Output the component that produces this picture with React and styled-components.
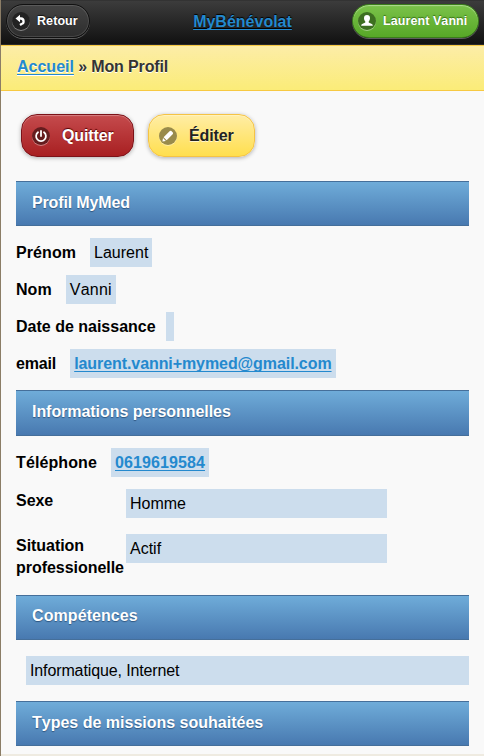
import React from "react";
import styled, { createGlobalStyle } from "styled-components";

const GlobalStyle = createGlobalStyle`
  * { box-sizing: border-box; }
  body { margin: 0; background: #f9f9f9; overflow: hidden; }
  body, button { font-family: "Liberation Sans", Helvetica, Arial, sans-serif; font-kerning: none; }
`;

const Page = styled.div`
  height: 756px;
  display: flex;
  flex-direction: column;
  border-left: 1px solid #8b7d66;
  background: #f9f9f9;
  color: #000;
  font-size: 16px;
  overflow: hidden;
`;

const Header = styled.header`
  flex: none;
  height: 45px;
  padding: 3px 5px 0 5px;
  display: grid;
  grid-template-columns: 1fr auto 1fr;
  align-items: start;
  border-top: 1px solid #333;
  border-bottom: 1px solid #2a2a2a;
  background: linear-gradient(#3c3c3c, #111);
`;

const Link = styled.a`
  color: #2489ce;
  font-weight: bold;
  letter-spacing: ${(p) => p.$track || 0}px;
  text-decoration: underline;
  text-decoration-thickness: 1px;
  text-underline-offset: 2px;
  text-decoration-skip-ink: none;
`;

const Title = styled(Link)`
  margin-top: 9px;
  line-height: 18px;
  text-shadow: 0 -1px 1px #000;
`;

const tones = {
  dark: "border-color:#111;background:linear-gradient(#444,#2d2d2d);color:#fff;text-shadow:0 -1px 1px #111;",
  green: "border-color:#3b7d1b;background:linear-gradient(#7bc24a,#57a827);color:#fff;text-shadow:0 -1px 1px #387016;",
  red: "border-color:#7c1218;background:linear-gradient(#c54b4d,#a81f21);color:#fff;text-shadow:0 -1px 1px #500;",
  yellow: "border-color:#f5c344;background:linear-gradient(#ffeda5,#ffdf4e);color:#222;text-shadow:0 1px 0 #fff6cd;",
};

const SmallButton = styled.button`
  display: flex;
  align-items: center;
  justify-self: ${(p) => (p.$end ? "end" : "start")};
  width: ${(p) => p.$w}px;
  height: 34px;
  padding: 0 0 0 5px;
  gap: 7px;
  border: 1px solid;
  border-radius: 17px;
  font-size: 12.5px;
  font-weight: bold;
  letter-spacing: 0.08px;
  white-space: nowrap;
  ${(p) => tones[p.$tone]}
  box-shadow: ${(p) => (p.$tone === "dark" ? "inset 0 0 0 1px rgba(255, 255, 255, 0.12)" : "inset 0 1px 1px rgba(255, 255, 255, 0.4)")}, 0 1px 0 rgba(255, 255, 255, 0.3);
`;

const LargeButton = styled.button`
  display: flex;
  align-items: center;
  width: ${(p) => p.$w}px;
  height: 43px;
  padding: 0 0 0 10px;
  gap: 12px;
  border: 1px solid;
  border-radius: 16px;
  font-size: 16px;
  letter-spacing: -0.1px;
  font-weight: bold;
  ${(p) => tones[p.$tone]}
  box-shadow: inset 0 1px 1px rgba(255, 255, 255, 0.3), 0 1px 4px rgba(0, 0, 0, 0.3);
`;

const Disc = styled.span`
  flex: none;
  width: 18px;
  height: 18px;
  border-radius: 50%;
  background: ${(p) => p.$bg};
  box-shadow: 0 1px 0 rgba(255, 255, 255, 0.4);
  svg { display: block; }
`;

const Breadcrumb = styled.nav`
  flex: none;
  height: 46px;
  padding: 12px 16px 0;
  line-height: 18px;
  font-weight: bold;
  letter-spacing: -0.14px;
  border-top: 1px solid #f7c942;
  border-bottom: 1px solid #f7c942;
  background: linear-gradient(#fceda7, #fbec78);
  color: #333;
  text-shadow: 0 1px 0 #fff;
`;

const Content = styled.main`
  flex: 1;
  padding: 23px 15px 0;
`;

const Actions = styled.div`
  display: flex;
  gap: 14px;
  padding-left: 5px;
  margin-bottom: 24px;
`;

const SectionTitle = styled.h3`
  margin: 0;
  height: ${(p) => p.$h || 45}px;
  padding: ${(p) => (p.$raised ? 10 : 11)}px 16px 0;
  line-height: 20px;
  font-size: 16px;
  letter-spacing: ${(p) => p.$track || 0}px;
  color: #fff;
  border-top: 1px solid #456f9a;
  border-bottom: 1px solid #456f9a;
  background: linear-gradient(#6facd9, #4879b0);
  text-shadow: 0 1px 1px #2f5680;
`;

const Fields = styled.div`
  display: flex;
  flex-direction: column;
  gap: 8px;
  padding: 12px 0;
`;

const Row = styled.div`
  display: flex;
  height: 29px;
  gap: ${(p) => p.$gap || 14}px;
`;

const Label = styled.span`
  font-weight: bold;
  line-height: 29px;
  letter-spacing: ${(p) => p.$track || 0}px;
  white-space: nowrap;
`;

const Value = styled.span`
  height: 29px;
  padding: 0 4px;
  line-height: 29px;
  letter-spacing: ${(p) => p.$track || 0}px;
  white-space: nowrap;
  background: #ccdded;
  color: #000;
`;

const GridRow = styled.div`
  display: grid;
  grid-template-columns: 110px 261px;
  align-items: start;
  height: ${(p) => p.$h}px;
`;

const WrapLabel = styled.span`
  padding-top: 1px;
  font-weight: bold;
  line-height: 22px;
  letter-spacing: -0.04px;
`;

const Skills = styled.div`
  display: grid;
  padding: 16px 0 16px 10px;
`;

const BottomEdge = styled.footer`
  flex: none;
  height: 2px;
  background: #efebe1;
`;

const BackIcon = () => (
  <svg width="18" height="18" viewBox="0 0 18 18" fill="none">
    <path d="M7 6.500h2a2.800 2.800 0 0 1 .5 5.500L8 13" stroke="#fff" strokeWidth="2.300" />
    <path d="M3.500 6.500 8 2.800v7.400z" fill="#fff" />
  </svg>
);

const UserIcon = () => (
  <svg width="18" height="18" viewBox="0 0 18 18" fill="#fff">
    <path d="M9 3c2 0 3 1.200 3 3.100 0 1.400-.5 2.600-1.300 3.400v1l3.100 1.500c.7.300 1 .8 1 1.800H3.200c0-1 .3-1.500 1-1.800l3.100-1.500v-1C6.500 8.700 6 7.500 6 6.100 6 4.200 7 3 9 3z" />
  </svg>
);

const PowerIcon = () => (
  <svg width="18" height="18" viewBox="0 0 18 18" fill="none" stroke="#fff" strokeWidth="1.800" strokeLinecap="round">
    <path d="M6 5.300a4.900 4.900 0 1 0 6 0M9 4v5" />
  </svg>
);

const PencilIcon = () => (
  <svg width="18" height="18" viewBox="0 0 18 18" fill="#fff">
    <path d="m4.600 10.200 5.700-5.700c.8-.8 1.600-.9 2.300-.2l1 1c.7.700.6 1.500-.2 2.300l-5.700 5.700zM4 11.100l2.900 2.900-3.500.6z" />
  </svg>
);

export default function App() {
  return (
    <>
      <GlobalStyle />
      <Page>
        <Header>
          <SmallButton $tone="dark" $w={84}>
            <Disc $bg="#222"><BackIcon /></Disc>Retour
          </SmallButton>
          <Title>MyBénévolat</Title>
          <SmallButton $tone="green" $w={127} $end>
            <Disc $bg="#3d6f20"><UserIcon /></Disc>Laurent Vanni
          </SmallButton>
        </Header>
        <Breadcrumb><Link>Accueil</Link> » Mon Profil</Breadcrumb>
        <Content>
          <Actions>
            <LargeButton $tone="red" $w={113}>
              <Disc $bg="#651c1e"><PowerIcon /></Disc>Quitter
            </LargeButton>
            <LargeButton $tone="yellow" $w={107}>
              <Disc $bg="#998b4b"><PencilIcon /></Disc>Éditer
            </LargeButton>
          </Actions>
          <SectionTitle $track={-0.15}>Profil MyMed</SectionTitle>
          <Fields>
            <Row><Label $track={0.08}>Prénom</Label><Value>Laurent</Value></Row>
            <Row><Label $track={0.05}>Nom</Label><Value $track={0.25}>Vanni</Value></Row>
            <Row $gap={10}><Label>Date de naissance</Label><Value /></Row>
            <Row><Label $track={-0.15}>email</Label><Value><Link $track={-0.08}>laurent.vanni+mymed@gmail.com</Link></Value></Row>
          </Fields>
          <SectionTitle $h={46} $track={-0.05}>Informations personnelles</SectionTitle>
          <Fields>
            <Row><Label $track={0.11}>Téléphone</Label><Value><Link $track={0.1}>0619619584</Link></Value></Row>
          </Fields>
          <GridRow $h={45}><WrapLabel>Sexe</WrapLabel><Value>Homme</Value></GridRow>
          <GridRow $h={61}><WrapLabel>Situation professionelle</WrapLabel><Value>Actif</Value></GridRow>
          <SectionTitle $raised $track={0.08}>Compétences</SectionTitle>
          <Skills><Value $track={-0.12}>Informatique, Internet</Value></Skills>
          <SectionTitle>Types de missions souhaitées</SectionTitle>
        </Content>
        <BottomEdge />
      </Page>
    </>
  );
}
